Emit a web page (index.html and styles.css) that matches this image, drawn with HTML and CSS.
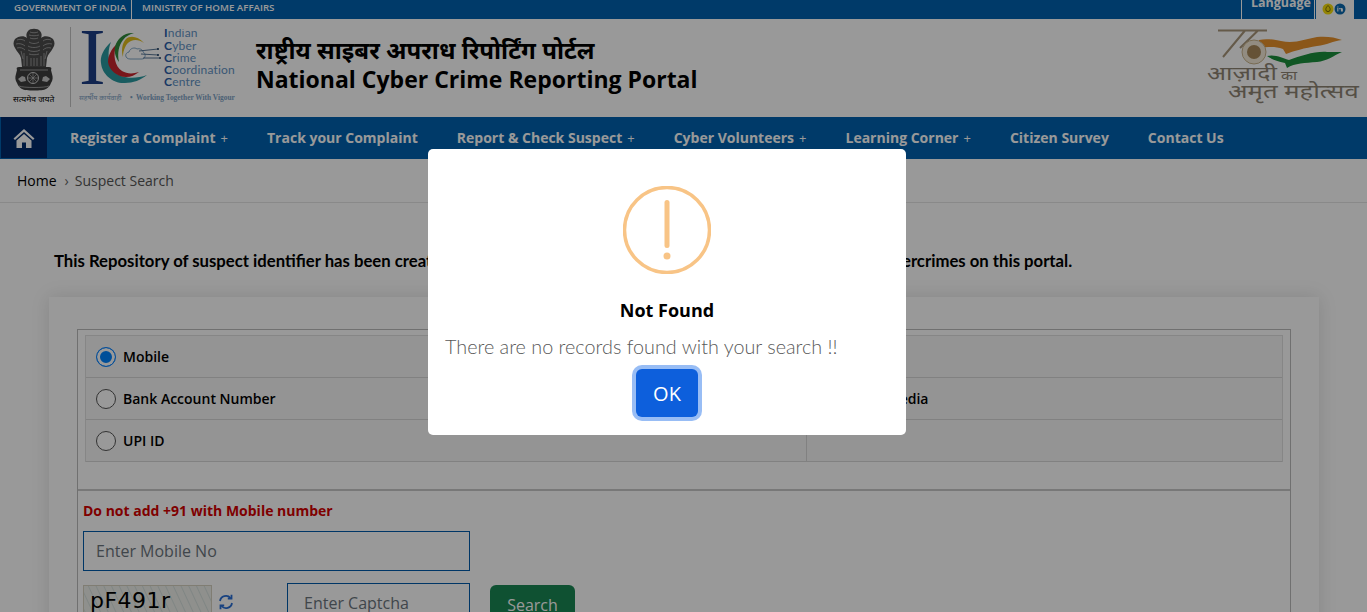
FILE: index.html
```html
<!DOCTYPE html>
<html lang="en">
<head>
    <meta charset="UTF-8">
    <meta name="viewport" content="width=device-width, initial-scale=1.0">
    <title>National Cyber Crime Reporting Portal</title>
    <link rel="stylesheet" href="styles.css">
</head>
<body>
    <div class="topbar">
        <div class="topbar-links">
            <span class="gov-link first">GOVERNMENT OF INDIA</span>
            <span class="gov-link">MINISTRY OF HOME AFFAIRS</span>
        </div>
        <div class="topbar-right">
            <span class="language">Language</span>
            <div class="social">
                <svg width="12" height="12" viewBox="0 0 12 12"><circle cx="6" cy="6" r="5.500" fill="#f5dd0a"/><path d="M6 2.500c1.600 1.600 2.200 2.800 2.200 3.900a2.200 2.200 0 0 1-4.400 0C3.800 5.300 4.400 4.100 6 2.500z" fill="none" stroke="#7a6d00" stroke-width="1"/></svg>
                <svg width="12" height="12" viewBox="0 0 12 12"><circle cx="6" cy="6" r="5.500" fill="#0a69b0"/><path d="M3.300 5h1.100v3.600H3.300zM3.300 3.400h1.100v1H3.300zM5.200 5h1v.6c.3-.4.7-.7 1.300-.7 1 0 1.400.7 1.400 1.700v2H6.900V6.800c0-.5-.2-.9-.7-.9s-.9.400-.9.900v1.800H5.200z" fill="#fff"/></svg>
            </div>
        </div>
    </div>

    <header class="site-header">
        <div class="emblem">
            <svg width="44" height="66" viewBox="0 0 44 66">
                <!-- lions -->
                <path d="M16 4c2-3 10-3 12 0 2 2 2 5 1 7 3-3 9-2 12 1 2 3 2 6 0 9-2 4-5 6-6 10l-1 9H10l-1-9c-1-4-4-6-6-10-2-3-2-6 0-9 3-3 9-4 12-1-1-2-1-5 1-7z" fill="#4c4c4c"/>
                <g fill="none" stroke="#b5b5b5" stroke-width=".7">
                    <path d="M18 5c2 1 6 1 8 0M17 8c3 1 7 1 10 0M18 11c2 1 6 1 8 0"/>
                    <path d="M5 13c2-1 6-1 8 1M4 17c3-1 7 0 9 2M5 21c3-1 6 0 8 2"/>
                    <path d="M39 13c-2-1-6-1-8 1M40 17c-3-1-7 0-9 2M39 21c-3-1-6 0-8 2"/>
                    <path d="M17 15c3 2 7 2 10 0M16 19c3 2 9 2 12 0M16 23c3 2 9 2 12 0M17 27c3 1 7 1 10 0"/>
                    <path d="M12 26v13M15 29v10M19 31v8M22 31v8M25 31v8M29 29v10M32 26v13M9 24l2 8M35 24l-2 8"/>
                </g>
                <!-- abacus -->
                <path d="M7 40h30c2 0 3 1 2 3l1 4c1 3 1 6-1 9-1 3-3 5-5 6-3 2-21 2-24 0-2-1-4-3-5-6-2-3-2-6-1-9l1-4c-1-2 0-3 2-3z" fill="#3f3f3f"/>
                <path d="M8 43h28M7 59c4 2 26 2 30 0" stroke="#bdbdbd" stroke-width=".7" fill="none"/>
                <circle cx="21" cy="51" r="5.500" fill="none" stroke="#dcdcdc" stroke-width=".9"/>
                <path d="M21 46v10M16 51h10M17.500 47.500l7 7M24.500 47.500l-7 7" stroke="#dcdcdc" stroke-width=".5"/>
                <path d="M6 52l4-3 3 1 1 4-5 1zM38 52l-4-3-3 1-1 4 5 1z" fill="#c6c6c6"/>
            </svg>
            <span class="emblem-motto">सत्यमेव जयते</span>
        </div>
        <div class="logo">
            <svg width="165" height="82" viewBox="-2 0 165 82">
                <text class="logo-i" x="-2" y="55">I</text>
                <path d="M30 13C22 20 19 28 20 34 21 46 33 55 44 54 52 54 60 51 66 46 58 49 48 50 40 47 30 43 24 28 30 13z" fill="#2b9aa0"/>
                <path d="M36 15C30 20 27 27 27 33 28 41 36 48 45 48 50 48 54 46 58 43 52 45 46 45 41 42 34 38 31 25 36 15z" fill="#c8252d"/>
                <path d="M53 4C44 3 36 9 34 18 33 24 35 29 38 33 36 24 38 16 42 11 45 7 49 5 53 4z" fill="#2f8a3b"/>
                <path d="M63 14C57 7 49 6 45 10 41 14 40 22 42 28 42 21 45 14 50 12 54 10 59 11 63 14z" fill="#e0bd1d"/>
                <path d="M49 30c-5 0-6-6-1-7 1-4 6-5 8-3 3-1 6 1 6 3 3 1 3 7-1 7z" fill="none" stroke="#5f8fb8" stroke-width=".8"/>
                <path d="M58 22l19-2M60 25l17 1M62 29l16 0" stroke="#46688a" stroke-width=".9"/>
                <circle cx="77" cy="20" r="1" fill="#17375e"/>
                <circle cx="77" cy="26" r="1" fill="#17375e"/>
                <circle cx="79" cy="29" r="1" fill="#17375e"/>
                <text class="logo-name" x="83" y="8"><tspan class="logo-cap">I</tspan>ndian</text>
                <text class="logo-name" x="83" y="20.500"><tspan class="logo-cap">C</tspan>yber</text>
                <text class="logo-name" x="83" y="32.500"><tspan class="logo-cap">C</tspan>rime</text>
                <text class="logo-name" x="83" y="45"><tspan class="logo-cap">C</tspan>oordination</text>
                <text class="logo-name" x="83" y="57"><tspan class="logo-cap">C</tspan>entre</text>
                <text class="logo-tag hi" x="-2" y="71">सहर्षीय कार्यवाही</text>
                <text class="logo-tag" x="49" y="71">•</text>
                <text class="logo-tag" x="55" y="71">Working Together With Vigour</text>
            </svg>
        </div>
        <div class="site-title">
            <div class="title-hi">राष्ट्रीय साइबर अपराध रिपोर्टिंग पोर्टल</div>
            <div class="title-en">National Cyber Crime Reporting Portal</div>
        </div>
        <div class="azadi">
            <svg width="155" height="80" viewBox="0 0 155 80">
                <path d="M13 5.500H62M40 5.500L18 32M53 5.500L35 23" fill="none" stroke="#a8967a" stroke-width="2"/>
                <path d="M54 15C62 13 70 15 76 16 90 19 100 14 112 12 120 11 130 12 137 15 128 16 122 20 112 21 100 23 88 26 81 29L78 24C70 21 62 22 55 23z" fill="#e8912a"/>
                <path d="M62 31C70 29 78 33 84 35 96 31 110 26 122 27 128 27 133 27 137 27 128 31 122 36 112 37 100 38 90 38 82 43L80 38C72 36 66 34 62 31z" fill="#1c8f3c"/>
                <circle cx="49" cy="27" r="12" fill="#f3ead8" stroke="#c9b48b" stroke-width="1"/>
                <circle cx="49" cy="27" r="7" fill="#a8895a"/>
                <text class="azadi-hi" transform="translate(2 55) scale(1.31 1)">आज़ादी</text>
                <text class="azadi-ka" transform="translate(76 55) scale(1.2 1)">का</text>
                <text class="azadi-hi" transform="translate(23 73) scale(1.35 1)">अमृत महोत्सव</text>
            </svg>
        </div>
    </header>

    <nav class="main-nav">
        <a class="nav-home">
            <svg width="22" height="20" viewBox="0 0 22 20"><path d="M11 1L.5 10.500 2 12l9-8 9 8 1.500-1.500zM3.500 12.500V20H9v-5.500h4V20h5.500v-7.500L11 6z" fill="#fff"/></svg>
        </a>
        <div class="nav-items">
            <a class="nav-item">Register a Complaint<span class="plus">+</span></a>
            <a class="nav-item">Track your Complaint</a>
            <a class="nav-item">Report &amp; Check Suspect<span class="plus">+</span></a>
            <a class="nav-item">Cyber Volunteers<span class="plus">+</span></a>
            <a class="nav-item">Learning Corner<span class="plus">+</span></a>
            <a class="nav-item">Citizen Survey</a>
            <a class="nav-item">Contact Us</a>
        </div>
    </nav>

    <div class="breadcrumb">
        <span class="crumb-home">Home</span>
        <span class="crumb-sep">&rsaquo;</span>
        <span class="crumb-now">Suspect Search</span>
    </div>

    <main class="content">
        <p class="intro">This Repository of suspect identifier has been created based on the complaints reported by citizens concerning cybercrimes on this portal.</p>

        <section class="card">
            <div class="search-box">
                <div class="type-table">
                    <label class="type-cell"><span class="radio checked"></span>Mobile</label>
                    <label class="type-cell col2"><span class="radio"></span>Email</label>
                    <label class="type-cell"><span class="radio"></span>Bank Account Number</label>
                    <label class="type-cell col2"><span class="radio"></span>Social Media</label>
                    <label class="type-cell"><span class="radio"></span>UPI ID</label>
                    <label class="type-cell col2"></label>
                </div>
                <div class="form-area">
                    <p class="warn">Do not add +91 with Mobile number</p>
                    <input class="text-input mobile" type="text" placeholder="Enter Mobile No">
                    <div class="captcha-row">
                        <div class="captcha-img">pF491r</div>
                        <svg class="refresh" width="18" height="18" viewBox="0 0 18 18" fill="none" stroke="#2a6fd6" stroke-width="1.800">
                            <path d="M3 8a6 6 0 0 1 10.500-3"/>
                            <path d="M15 10a6 6 0 0 1-10.500 3"/>
                            <path d="M14.500 1.800v3.700h-3.700M3.500 16.200v-3.700h3.700"/>
                        </svg>
                        <input class="text-input captcha" type="text" placeholder="Enter Captcha">
                        <button class="search-btn">Search</button>
                    </div>
                </div>
            </div>
        </section>
    </main>

    <div class="overlay">
        <div class="modal">
            <svg class="warn-icon" width="88" height="88" viewBox="0 0 88 88">
                <circle cx="44" cy="44" r="42.500" fill="none" stroke="#f8c486" stroke-width="3.500"/>
                <rect x="41.500" y="14" width="5" height="48" rx="2.500" fill="#f8c486"/>
                <circle cx="44" cy="70" r="3.500" fill="#f8c486"/>
            </svg>
            <h2 class="modal-title">Not Found</h2>
            <p class="modal-text">There are no records found with your search !!</p>
            <button class="ok-btn">OK</button>
        </div>
    </div>
</body>
</html>
```

FILE: styles.css
```css
* {
    box-sizing: border-box;
}
html, body {
    height: 612px;
    overflow: hidden;
}
body {
    margin: 0;
    font-family: "Open Sans", "Noto Sans", sans-serif;
    background: #fff;
    color: #000;
}
.topbar {
    height: 19px;
    background: #0062af;
    display: flex;
    justify-content: space-between;
    color: #fff;
}
.topbar-links {
    display: flex;
    padding-left: 14px;
}
.gov-link {
    font-size: 9.700px;
    font-weight: 600;
    line-height: 15px;
    padding-left: 10px;
}
.gov-link.first {
    padding: 0 5px 0 0;
    border-right: 1px solid #fff;
}
.topbar-right {
    display: flex;
    padding-right: 13px;
}
.language {
    width: 74px;
    border-left: 1px solid #fff;
    border-right: 1px solid #fff;
    font-size: 12.500px;
    font-weight: 700;
    line-height: 6px;
    text-align: right;
    padding-right: 3px;
    overflow: hidden;
}
.social {
    width: 38px;
    margin-left: 1px;
    background: #fff;
    display: flex;
    justify-content: center;
    padding: 3px 2px 0 0;
}
.site-header {
    height: 98px;
    display: flex;
    align-items: flex-start;
    background: #fff;
}
.emblem {
    width: 59px;
    margin: 8px 0 0 12px;
    display: flex;
    flex-direction: column;
    height: 80px;
    border-right: 1px solid #c4c4c4;
}
.emblem svg {
    display: block;
}
.emblem-motto {
    font-size: 8.500px;
    white-space: nowrap;
    line-height: 11px;
    margin-left: 1px;
}
.logo {
    margin: 10px 0 0 8px;
    width: 177px;
}
.logo svg {
    display: block;
}
.logo-i {
    font-family: "Liberation Serif", serif;
    font-size: 80px;
    fill: #1d3f85;
}
.logo-name {
    font-family: Lato, sans-serif;
    font-size: 12px;
    fill: #5f92c4;
    letter-spacing: .2px;
}
.logo-cap {
    fill: #2a5ea8;
    font-weight: 700;
}
.logo-tag {
    font-family: "Liberation Serif", serif;
    font-size: 7.400px;
    font-weight: 700;
    fill: #7ea2c4;
}
.logo-tag.hi {
    font-family: "Noto Sans", sans-serif;
    font-size: 7px;
    font-weight: 400;
}
.site-title {
    padding-top: 16px;
}
.title-hi {
    font-size: 24px;
    font-weight: 700;
    line-height: 30px;
}
.title-en {
    font-size: 23px;
    font-weight: 700;
    line-height: 30px;
    margin-top: -1px;
    white-space: nowrap;
}
.azadi {
    margin: 6px 7px 0 auto;
}
.azadi-hi {
    font-size: 19px;
    fill: #8e8474;
    font-family: "Noto Sans", sans-serif;
}
.azadi-ka {
    font-size: 13px;
    fill: #8e8474;
    font-family: "Noto Sans", sans-serif;
}
.main-nav {
    height: 42px;
    background: #0062af;
    display: flex;
}
.nav-home {
    width: 46px;
    height: 41px;
    margin-left: 1px;
    background: #002b6b;
    display: flex;
    align-items: center;
    justify-content: center;
}
.nav-items {
    display: flex;
    align-items: center;
    gap: 39px;
    padding: 0 0 2px 23px;
}
.nav-item {
    color: #fff;
    font-size: 14px;
    font-weight: 700;
    white-space: nowrap;
}
.plus {
    font-weight: 400;
    margin-left: 5px;
    font-size: 13px;
}
.breadcrumb {
    height: 44px;
    padding: 0 17px;
    border-bottom: 1px solid #e4e4e4;
    display: flex;
    align-items: center;
    font-size: 14px;
}
.crumb-sep {
    color: #666;
    margin: 0 6px 0 8px;
}
.crumb-now {
    color: #555;
}
.content {
    padding: 0 48px 0 49px;
}
.intro {
    margin: 47px 0 0 5px;
    font-family: Lato, sans-serif;
    font-size: 16.720px;
    font-weight: 700;
    line-height: 22px;
    white-space: nowrap;
}
.card {
    margin-top: 25px;
    padding: 32px 28px 0;
    height: 400px;
    background: #fff;
    box-shadow: 0 0 18px rgba(0,0,0,0.12);
}
.search-box {
    border: 1px solid #bbb;
    padding-top: 5px;
    height: 400px;
}
.type-table {
    margin: 0 7px;
    display: grid;
    grid-template-columns: 720px 1fr;
    grid-auto-rows: 42px;
    border: 1px solid #e0e0e0;
    border-bottom: none;
    background: #f7f7f7;
}
.type-cell {
    display: flex;
    align-items: center;
    gap: 7px;
    padding-left: 10px;
    font-size: 14px;
    font-weight: 600;
    border-bottom: 1px solid #d8d8d8;
}
.type-cell.col2 {
    border-left: 1px solid #d8d8d8;
}
.radio {
    width: 20px;
    height: 20px;
    border-radius: 50%;
    border: 1px solid #555;
    background: #fff;
}
.radio.checked {
    border-color: #0d84ff;
    background: #0084ff;
    box-shadow: inset 0 0 0 3px #fff;
}
.form-area {
    margin-top: 27px;
    border-top: 2px solid #c8c8c8;
    padding: 10px 5px 0;
}
.warn {
    margin: 0;
    font-size: 14px;
    font-weight: 700;
    line-height: 20px;
    color: #d40000;
}
.text-input {
    display: block;
    height: 40px;
    border: 1px solid #005baa;
    padding: 0 12px;
    font-family: "Open Sans", sans-serif;
    font-size: 16px;
    background: #fff;
}
.text-input::placeholder {
    color: #6c757d;
    opacity: 1;
}
.mobile {
    width: 387px;
    margin-top: 10px;
}
.captcha-row {
    display: flex;
    align-items: flex-start;
    margin-top: 12px;
}
.captcha-img {
    width: 129px;
    height: 40px;
    margin-top: 2px;
    padding-left: 6px;
    background: repeating-linear-gradient(65deg, #eef1ec 0, #eef1ec 5px, #d6dfdc 6px, #eef1ec 7px);
    border: 1px solid #d5d0c0;
    font-family: "DejaVu Sans", sans-serif;
    font-size: 22px;
    line-height: 30px;
    letter-spacing: .5px;
}
.refresh {
    margin: 10px 0 0 5px;
}
.captcha {
    width: 183px;
    margin-left: 52px;
    padding-left: 16px;
}
.search-btn {
    width: 85px;
    height: 40px;
    margin: 2px 0 0 20px;
    border: none;
    border-radius: 6px;
    background: #198754;
    color: #fff;
    font-family: "Open Sans", sans-serif;
    font-size: 16px;
}
.overlay {
    position: fixed;
    inset: 0;
    background: rgba(0,0,0,0.4);
    display: flex;
    justify-content: center;
    align-items: flex-start;
    padding: 149px 33px 0 0;
}
.modal {
    width: 478px;
    height: 286px;
    background: #fff;
    border-radius: 5px;
    display: flex;
    flex-direction: column;
    align-items: center;
    padding: 37px 17px 0;
}
.warn-icon {
    display: block;
    flex: none;
}
.modal-title {
    margin: 24px 0 0;
    font-size: 18px;
    font-weight: 700;
    line-height: 24px;
}
.modal-text {
    margin: 11px 0 0;
    align-self: flex-start;
    font-family: Lato, sans-serif;
    font-size: 19.800px;
    font-weight: 300;
    line-height: 26px;
    color: #595959;
    white-space: nowrap;
}
.ok-btn {
    margin-top: 10px;
    width: 62px;
    height: 48px;
    flex: none;
    border: none;
    border-radius: 6px;
    background: #0d5fdc;
    color: #fff;
    font-family: "Open Sans", sans-serif;
    font-size: 20px;
    box-shadow: 0 0 0 4px #98bdf5;
}
```
